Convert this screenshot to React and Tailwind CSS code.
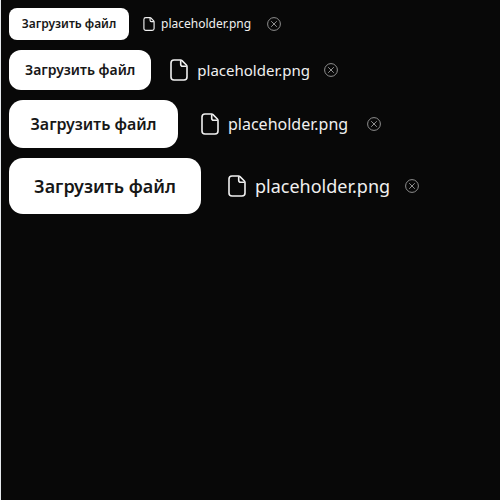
const sizes = [
  {
    id: "xs",
    row: "h-8",
    button: "px-3 rounded-lg text-xs min-w-[120px]",
    file: "ml-[14px] gap-[6px] text-xs",
    name: "min-w-[92px]",
    icon: "h-[14px] w-3",
    stroke: 1.8,
    clear: "ml-[14px]",
  },
  {
    id: "s",
    row: "h-10",
    button: "px-4 rounded-xl text-sm min-w-[142px]",
    file: "ml-[19px] gap-[9px] text-[15px]",
    name: "min-w-[111px]",
    icon: "h-[22px] w-[18px]",
    stroke: 1.6,
    clear: "ml-[14px]",
  },
  {
    id: "m",
    row: "h-12",
    button: "px-5 rounded-[14px] text-base min-w-[169px]",
    file: "ml-[23px] gap-[9px] text-base",
    name: "min-w-[124px]",
    icon: "h-[22px] w-[18px]",
    stroke: 1.6,
    clear: "ml-[15px]",
  },
  {
    id: "l",
    row: "h-14",
    button: "px-6 rounded-[14px] text-lg min-w-[192px]",
    file: "ml-[27px] gap-[9px] text-lg",
    name: "min-w-[135px]",
    icon: "h-[22px] w-[18px]",
    stroke: 1.6,
    clear: "ml-[15px]",
  },
];

function FileIcon({ className, strokeWidth }) {
  return (
    <svg
      className={className}
      viewBox="0 0 18 22"
      fill="none"
      stroke="currentColor"
      strokeWidth={strokeWidth}
      strokeLinejoin="round"
      aria-hidden="true"
    >
      <path d="M4 1h6.6c.5 0 1 .2 1.4.6l4.4 4.4c.4.4.6.9.6 1.4V18a3 3 0 0 1-3 3H4a3 3 0 0 1-3-3V4a3 3 0 0 1 3-3Z" />
      <path d="M10.7 1.2v4a2 2 0 0 0 2 2h4" />
    </svg>
  );
}

function ClearIcon() {
  return (
    <svg className="size-[14px]" viewBox="0 0 14 14" fill="none" stroke="currentColor" aria-hidden="true">
      <circle cx="7" cy="7" r="6.4" />
      <path d="m4.2 4.2 5.6 5.6m0-5.6-5.6 5.6" />
    </svg>
  );
}

function Upload({ size }) {
  return (
    <div className={`flex items-center ${size.row}`}>
      <button type="button" className={`h-full bg-white font-semibold whitespace-nowrap text-[#171717] ${size.button}`}>
        Загрузить файл
      </button>
      <div className={`flex items-center text-[#f0f0f0] ${size.file}`}>
        <FileIcon className={size.icon} strokeWidth={size.stroke} />
        <span className={size.name}>placeholder.png</span>
      </div>
      <button type="button" aria-label="Удалить файл" className={`text-[#8f8f8f] ${size.clear}`}>
        <ClearIcon />
      </button>
    </div>
  );
}

export default function App() {
  return (
    <main className="flex min-h-screen flex-col gap-[10px] border-l border-[#e5e9ec] bg-[#080808] p-2 font-['Noto_Sans',sans-serif]">
      {sizes.map((size) => (
        <Upload key={size.id} size={size} />
      ))}
    </main>
  );
}
